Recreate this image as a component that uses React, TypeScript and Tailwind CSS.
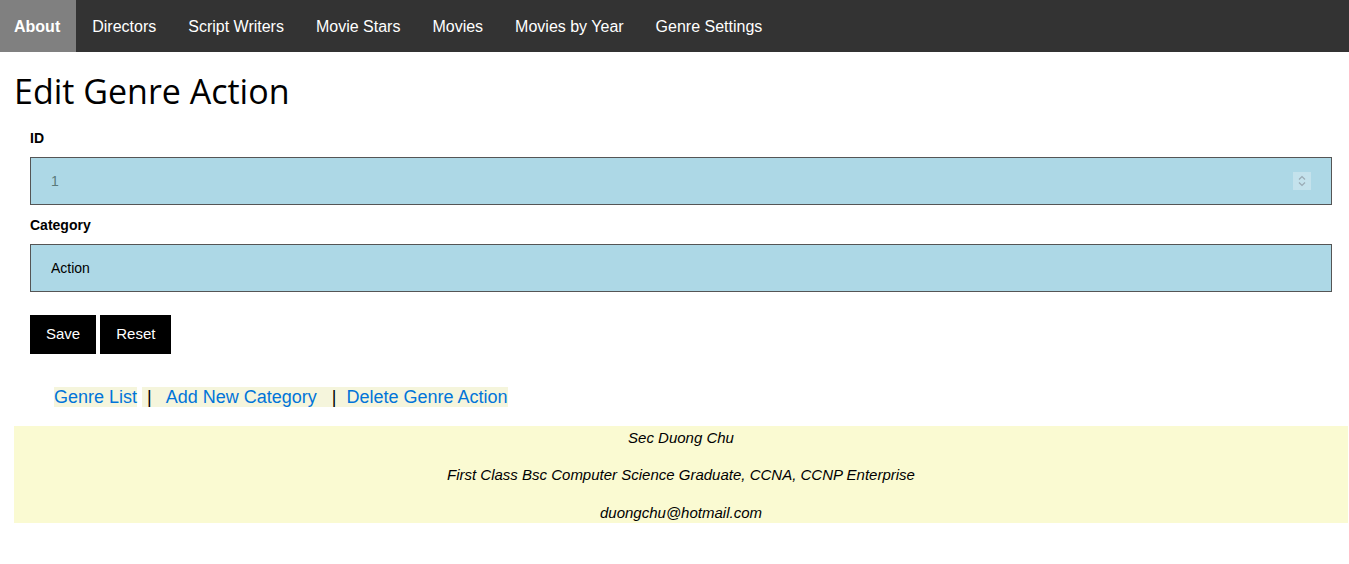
import { useState } from 'react';

const navItems = ['About', 'Directors', 'Script Writers', 'Movie Stars', 'Movies', 'Movies by Year', 'Genre Settings'];

export default function App() {
  const [category, setCategory] = useState('Action');

  return (
    <div className="min-h-[564px] bg-white" style={{ fontFamily: '"Liberation Sans", Arial, sans-serif' }}>
      {/* Top nav */}
      <nav className="flex h-[52px] bg-[#333333]">
        {navItems.map((item, i) => (
          <a
            key={item}
            className={`flex items-center px-[16px] pt-[1px] text-[16px] text-white ${i === 0 ? 'bg-[#808080] font-bold pl-[14px] pr-[16px]' : ''}`}
          >
            {item}
          </a>
        ))}
      </nav>

      <div className="pl-[14px] pr-[1px]">
        <h1 className="mt-[17px] text-[34px] leading-[44px] text-black" style={{ fontFamily: '"Open Sans", "Noto Sans", sans-serif' }}>
          Edit Genre Action
        </h1>

        <form className="px-[16px] pt-[17px]" onSubmit={(e) => e.preventDefault()}>
          <label className="block text-[14px] font-bold leading-[16px] text-black">ID</label>
          <div className="relative mt-[11px]">
            <input
              readOnly
              value="1"
              className="block h-[48px] w-full border border-[#555555] bg-[#add8e6] px-[20px] text-[14px] text-[#5a7a7a] outline-none"
            />
            <div className="absolute right-[21px] top-[15px] flex h-[18px] w-[18px] flex-col items-center justify-center bg-[#c4e2ec]">
              <svg width="10" height="14" viewBox="0 0 10 14" fill="none" stroke="#9aaab4" strokeWidth="1.2">
                <path d="M2 5.5 L5 2.5 L8 5.5" />
                <path d="M2 8.5 L5 11.5 L8 8.5" />
              </svg>
            </div>
          </div>

          <label className="mt-[12px] block text-[14px] font-bold leading-[16px] text-black">Category</label>
          <input
            value={category}
            onChange={(e) => setCategory(e.target.value)}
            className="mt-[11px] block h-[48px] w-full border border-[#555555] bg-[#add8e6] px-[20px] text-[14px] text-black outline-none"
          />

          <div className="mt-[23px] flex gap-[4px]">
            <button type="submit" className="h-[39px] bg-black px-[16px] text-[15px] text-white">Save</button>
            <button type="reset" className="h-[39px] bg-black px-[16px] text-[15px] text-white">Reset</button>
          </div>
        </form>

        <div className="mt-[33px] pl-[40px] text-[18px] leading-[20px]">
          <a className="bg-[#f5f5dc] text-[#0074d9]">Genre List</a>{' '}
          <span className="bg-[#f5f5dc] text-black">
            &nbsp;|&nbsp;&nbsp; <a className="text-[#0074d9]">Add New Category</a>&nbsp;&nbsp; |&nbsp; <a className="text-[#0074d9]">Delete Genre Action</a>
          </span>
        </div>

        <footer className="mt-[19px] flex h-[97px] flex-col items-center bg-[#fafad2] pt-[3px] text-[15px] italic leading-[17px] text-black">
          <p>Sec Duong Chu</p>
          <p className="mt-[20px]">First Class Bsc Computer Science Graduate, CCNA, CCNP Enterprise</p>
          <p className="mt-[21px]">duongchu@hotmail.com</p>
        </footer>
      </div>
    </div>
  );
}
